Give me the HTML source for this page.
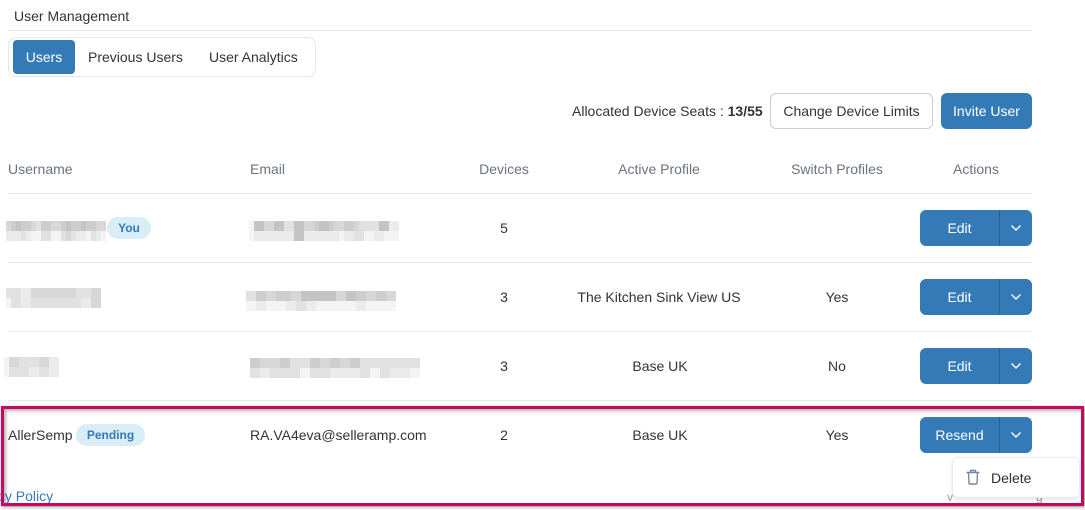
<!DOCTYPE html>
<html lang="en">
<head>
<meta charset="utf-8">
<title>User Management</title>
<style>
html,body{margin:0;padding:0;background:#fff}
body{width:1085px;height:510px;position:relative;overflow:hidden;font-family:"Liberation Sans",Arial,sans-serif;font-size:14px;color:#333}
.t{position:absolute;white-space:nowrap;line-height:20px}
.ctr{text-align:center}
.h{color:#6b7280}
.l{position:absolute;left:8px;width:1024px;height:1px;background:#e2e8f0}
.btn{position:absolute;box-sizing:border-box;border-radius:6px;text-align:center;line-height:34px;white-space:nowrap}
.p{background:#337ab7;color:#fff}
.o{background:#fff;border:1px solid #ccc;color:#333}
.sp{position:absolute;left:920px;width:112px;height:36px;background:#337ab7;border-radius:6px;color:#fff}
.sp span{position:absolute;left:0;top:0;width:79px;height:36px;line-height:36px;text-align:center}
.sp i{position:absolute;left:79px;top:0;width:1px;height:36px;background:#286090}
.sp svg{position:absolute;left:90px;top:14px}
.bdg{position:absolute;height:22px;line-height:22px;border-radius:11px;background:#d9edf7;color:#337ab7;font-size:12px;font-weight:bold;text-align:center}
.m{position:absolute;display:grid;grid-auto-rows:10px;grid-auto-flow:row;filter:blur(.3px)}
.m u{display:block;text-decoration:none;background:#ddd}
.m u.a{background:#c4c4c4}.m u.b{background:#cdcdcd}.m u.c{background:#d7d7d7}.m u.d{background:#e1e1e1}.m u.e{background:#ebebeb}.m u.f{background:#f4f4f4}
</style>
</head>
<body>
<div class="t" style="left:14px;top:6px">User Management</div>
<div class="l" style="top:30px"></div>

<div style="position:absolute;left:8px;top:37px;width:306px;height:38px;border:1px solid #e2e8f0;border-radius:8px"></div>
<div class="btn p" style="left:13px;top:40px;width:62px;height:34px;border-radius:4px">Users</div>
<div class="t" style="left:88px;top:47px">Previous Users</div>
<div class="t" style="left:209px;top:47px">User Analytics</div>

<div class="t" style="left:572px;top:101px">Allocated Device Seats : <b>13/55</b></div>
<div class="btn o" style="left:770px;top:93px;width:163px;height:36px">Change Device Limits</div>
<div class="btn p" style="left:941px;top:93px;width:91px;height:36px;line-height:36px">Invite User</div>

<div class="t h" style="left:8px;top:159px">Username</div>
<div class="t h" style="left:250px;top:159px">Email</div>
<div class="t h ctr" style="left:454px;top:159px;width:100px">Devices</div>
<div class="t h ctr" style="left:579px;top:159px;width:160px">Active Profile</div>
<div class="t h ctr" style="left:757px;top:159px;width:160px">Switch Profiles</div>
<div class="t h ctr" style="left:926px;top:159px;width:100px">Actions</div>
<div class="l" style="top:193px"></div>

<!-- Row 1 -->
<div class="m" style="left:6px;top:221px;grid-template-columns:repeat(20,5px)"><u class=c></u><u class=b></u><u class=a></u><u class=b></u><u class=b></u><u class=c></u><u class=d></u><u class=b></u><u class=b></u><u class=c></u><u class=c></u><u class=b></u><u class=a></u><u class=b></u><u class=b></u><u class=a></u><u class=b></u><u class=b></u><u class=c></u><u class=c></u><u class=e></u><u class=e></u><u class=e></u><u class=d></u><u class=e></u><u class=f></u><u class=f></u><u class=d></u><u class=d></u><u class=f></u><u class=f></u><u class=d></u><u class=c></u><u class=d></u><u class=e></u><u class=e></u><u class=f></u><u class=d></u><u class=e></u><u class=f></u></div>
<div class="bdg" style="left:107px;top:217px;width:44px">You</div>
<div class="m" style="left:249px;top:221px;grid-template-columns:repeat(30,5px)"><u class=f></u><u class=a></u><u class=a></u><u class=c></u><u class=c></u><u class=a></u><u class=a></u><u class=d></u><u class=d></u><u class=a></u><u class=a></u><u class=c></u><u class=c></u><u class=b></u><u class=a></u><u class=a></u><u class=b></u><u class=c></u><u class=c></u><u class=b></u><u class=b></u><u class=c></u><u class=d></u><u class=d></u><u class=d></u><u class=d></u><u class=a></u><u class=a></u><u class=e></u><u class=e></u><u class=f></u><u class=e></u><u class=e></u><u class=e></u><u class=e></u><u class=e></u><u class=e></u><u class=e></u><u class=e></u><u class=a></u><u class=a></u><u class=e></u><u class=e></u><u class=e></u><u class=e></u><u class=e></u><u class=e></u><u class=e></u><u class=f></u><u class=e></u><u class=e></u><u class=d></u><u class=d></u><u class=f></u><u class=f></u><u class=e></u><u class=e></u><u class=f></u><u class=f></u><u class=f></u></div>
<div class="t ctr" style="left:454px;top:218px;width:100px">5</div>
<div class="sp" style="top:210px"><span>Edit</span><i></i><svg width="12" height="8" viewBox="0 0 12 8"><path d="M1.5 1.5L6 6l4.5-4.5" fill="none" stroke="#fff" stroke-width="1.4"/></svg></div>
<div class="l" style="top:262px"></div>

<!-- Row 2 -->
<div class="m" style="left:6px;top:288px;grid-template-columns:repeat(19,5px)"><u class=d></u><u class=d></u><u class=d></u><u class=e></u><u class=e></u><u class=c></u><u class=c></u><u class=c></u><u class=c></u><u class=c></u><u class=c></u><u class=c></u><u class=c></u><u class=c></u><u class=d></u><u class=d></u><u class=d></u><u class=c></u><u class=c></u><u class=f></u><u class=d></u><u class=d></u><u class=e></u><u class=e></u><u class=d></u><u class=d></u><u class=d></u><u class=d></u><u class=d></u><u class=d></u><u class=d></u><u class=d></u><u class=d></u><u class=d></u><u class=e></u><u class=e></u><u class=c></u><u class=c></u></div>
<div class="m" style="left:246px;top:291px;grid-template-columns:repeat(30,5px)"><u class=d></u><u class=d></u><u class=b></u><u class=b></u><u class=c></u><u class=c></u><u class=b></u><u class=b></u><u class=b></u><u class=c></u><u class=c></u><u class=a></u><u class=a></u><u class=a></u><u class=a></u><u class=a></u><u class=a></u><u class=a></u><u class=c></u><u class=c></u><u class=a></u><u class=a></u><u class=b></u><u class=b></u><u class=c></u><u class=c></u><u class=b></u><u class=b></u><u class=c></u><u class=c></u><u class=f></u><u class=f></u><u class=e></u><u class=e></u><u class=f></u><u class=f></u><u class=f></u><u class=f></u><u class=e></u><u class=e></u><u class=d></u><u class=d></u><u class=e></u><u class=e></u><u class=f></u><u class=f></u><u class=f></u><u class=f></u><u class=f></u><u class=f></u><u class=f></u><u class=f></u><u class=e></u><u class=e></u><u class=f></u><u class=f></u><u class=f></u><u class=f></u><u class=f></u><u class=f></u></div>
<div class="t ctr" style="left:454px;top:287px;width:100px">3</div>
<div class="t ctr" style="left:559px;top:287px;width:200px">The Kitchen Sink View US</div>
<div class="t ctr" style="left:757px;top:287px;width:160px">Yes</div>
<div class="sp" style="top:279px"><span>Edit</span><i></i><svg width="12" height="8" viewBox="0 0 12 8"><path d="M1.5 1.5L6 6l4.5-4.5" fill="none" stroke="#fff" stroke-width="1.4"/></svg></div>
<div class="l" style="top:331px"></div>

<!-- Row 3 -->
<div class="m" style="left:4px;top:357px;grid-template-columns:repeat(11,5px)"><u class=f></u><u class=c></u><u class=c></u><u class=d></u><u class=d></u><u class=d></u><u class=d></u><u class=c></u><u class=c></u><u class=e></u><u class=e></u><u class=f></u><u class=d></u><u class=d></u><u class=d></u><u class=d></u><u class=e></u><u class=e></u><u class=d></u><u class=d></u><u class=e></u><u class=e></u></div>
<div class="m" style="left:250px;top:358px;grid-template-columns:repeat(34,5px)"><u class=b></u><u class=b></u><u class=c></u><u class=c></u><u class=c></u><u class=c></u><u class=b></u><u class=b></u><u class=d></u><u class=d></u><u class=d></u><u class=d></u><u class=b></u><u class=b></u><u class=c></u><u class=c></u><u class=b></u><u class=b></u><u class=c></u><u class=c></u><u class=b></u><u class=b></u><u class=d></u><u class=d></u><u class=d></u><u class=d></u><u class=d></u><u class=d></u><u class=d></u><u class=d></u><u class=d></u><u class=d></u><u class=d></u><u class=d></u><u class=d></u><u class=d></u><u class=e></u><u class=e></u><u class=d></u><u class=d></u><u class=d></u><u class=d></u><u class=d></u><u class=d></u><u class=f></u><u class=f></u><u class=d></u><u class=d></u><u class=d></u><u class=d></u><u class=e></u><u class=e></u><u class=e></u><u class=e></u><u class=e></u><u class=e></u><u class=d></u><u class=d></u><u class=f></u><u class=f></u><u class=d></u><u class=d></u><u class=e></u><u class=e></u><u class=e></u><u class=e></u><u class=f></u><u class=f></u></div>
<div class="t ctr" style="left:454px;top:356px;width:100px">3</div>
<div class="t ctr" style="left:580px;top:356px;width:160px">Base UK</div>
<div class="t ctr" style="left:757px;top:356px;width:160px">No</div>
<div class="sp" style="top:348px"><span>Edit</span><i></i><svg width="12" height="8" viewBox="0 0 12 8"><path d="M1.5 1.5L6 6l4.5-4.5" fill="none" stroke="#fff" stroke-width="1.4"/></svg></div>
<div class="l" style="top:400px"></div>

<!-- Row 4 -->
<div class="t" style="left:8px;top:425px">AllerSemp</div>
<div class="bdg" style="left:76px;top:424px;width:69px">Pending</div>
<div class="t" style="left:250px;top:425px">RA.VA4eva@selleramp.com</div>
<div class="t ctr" style="left:454px;top:425px;width:100px">2</div>
<div class="t ctr" style="left:580px;top:425px;width:160px">Base UK</div>
<div class="t ctr" style="left:757px;top:425px;width:160px">Yes</div>
<div class="sp" style="top:417px"><span>Resend</span><i></i><svg width="12" height="8" viewBox="0 0 12 8"><path d="M1.5 1.5L6 6l4.5-4.5" fill="none" stroke="#fff" stroke-width="1.4"/></svg></div>

<!-- Footer -->
<div class="t" style="left:-34px;top:486px;color:#337ab7">Privacy Policy</div>
<div class="t" style="left:947px;top:487px;color:#999;font-size:12px">v</div>
<div class="t" style="left:1036px;top:487px;color:#999;font-size:12px">g</div>

<!-- Dropdown -->
<div style="position:absolute;left:952px;top:457px;width:126px;height:39px;background:#fff;border:1px solid #e8ecf2;border-radius:6px;box-shadow:0 2px 5px rgba(0,0,0,.1)"></div>
<svg style="position:absolute;left:965px;top:469px" width="16" height="17" viewBox="0 0 16 17"><path d="M1.5 3.5h13M5.5 3.5V1.5h5v2M3.5 3.5l.5 10.5a1 1 0 0 0 1 1h6a1 1 0 0 0 1-1l.5-10.5" fill="none" stroke="#7486a0" stroke-width="1.4"/></svg>
<div class="t" style="left:991px;top:468px;color:#2b2f3a">Delete</div>

<!-- Highlight -->
<div style="position:absolute;left:1px;top:406px;width:1077px;height:94px;border:3px solid #c7085f;box-shadow:1px 1px 3px rgba(0,0,0,.45),inset 2px 2px 3px rgba(0,0,0,.3)"></div>
</body>
</html>
